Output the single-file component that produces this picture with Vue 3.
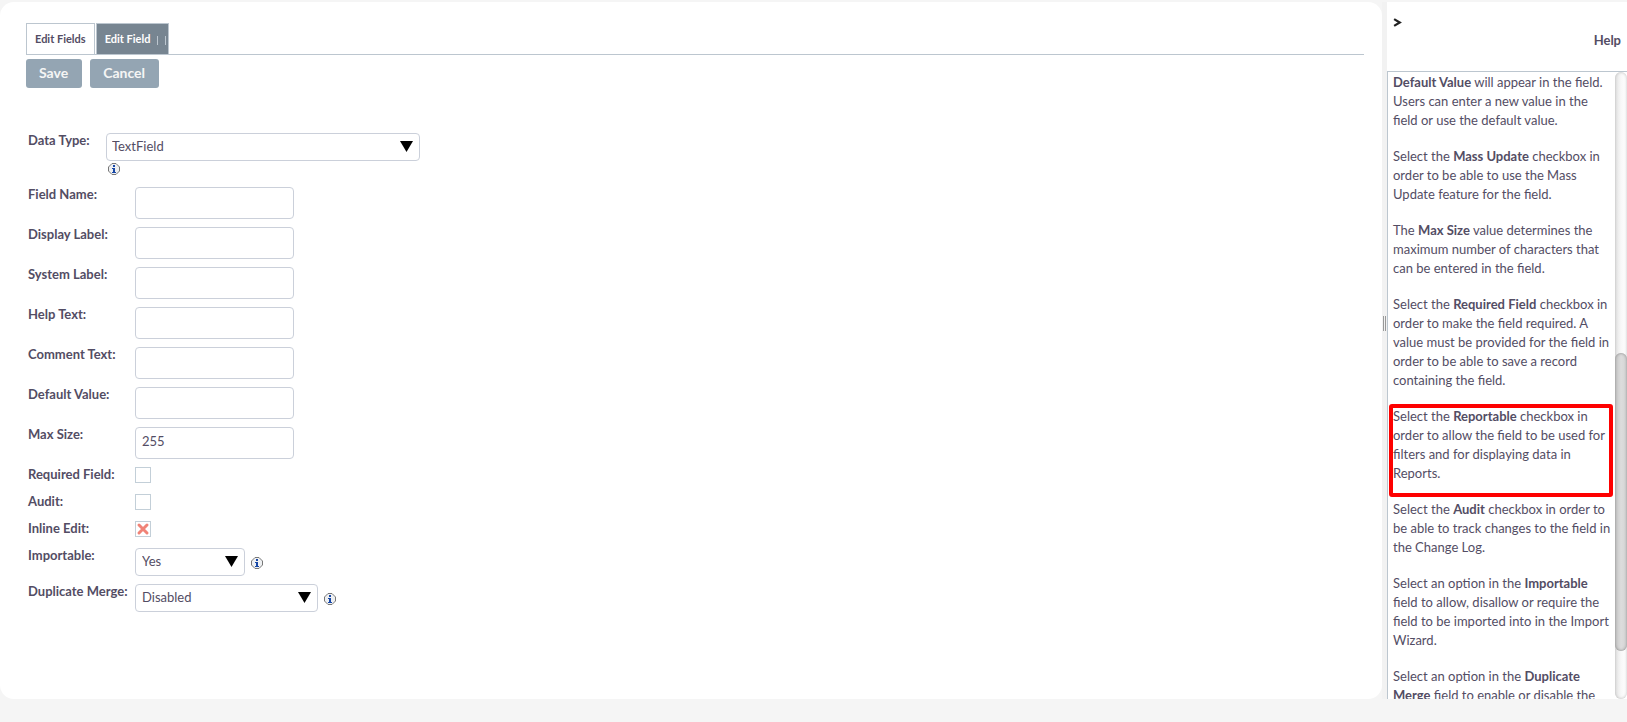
<script setup>
import { ref } from 'vue'

const dataType = ref('TextField')
const textFields = ref([
  { id: 'name', label: 'Field Name:', value: '' },
  { id: 'display', label: 'Display Label:', value: '' },
  { id: 'system', label: 'System Label:', value: '' },
  { id: 'help', label: 'Help Text:', value: '' },
  { id: 'comment', label: 'Comment Text:', value: '' },
  { id: 'default', label: 'Default Value:', value: '' },
  { id: 'max', label: 'Max Size:', value: '255' },
])
const checks = ref([
  { id: 'required', label: 'Required Field:', on: false },
  { id: 'audit', label: 'Audit:', on: false },
  { id: 'inline', label: 'Inline Edit:', on: true },
])
const selects = ref([
  { id: 'importable', label: 'Importable:', value: 'Yes', size: 'small' },
  { id: 'duplicate', label: 'Duplicate Merge:', value: 'Disabled', size: 'medium' },
])
const helpItems = [
  { before: '', term: 'Default Value', after: ' will appear in the field. Users can enter a new value in the field or use the default value.' },
  { before: 'Select the ', term: 'Mass Update', after: ' checkbox in order to be able to use the Mass Update feature for the field.' },
  { before: 'The ', term: 'Max Size', after: ' value determines the maximum number of characters that can be entered in the field.' },
  { before: 'Select the ', term: 'Required Field', after: ' checkbox in order to make the field required. A value must be provided for the field in order to be able to save a record containing the field.' },
  { before: 'Select the ', term: 'Reportable', after: ' checkbox in order to allow the field to be used for filters and for displaying data in Reports.', marked: true },
  { before: 'Select the ', term: 'Audit', after: ' checkbox in order to be able to track changes to the field in the Change Log.' },
  { before: 'Select an option in the ', term: 'Importable', after: ' field to allow, disallow or require the field to be imported into in the Import Wizard.' },
  { before: 'Select an option in the ', term: 'Duplicate Merge', after: ' field to enable or disable the' },
]
</script>

<template>
  <svg class="defs" aria-hidden="true">
    <symbol id="info" viewBox="0 0 12 12">
      <path d="M4 .5h4L11.500 4v4L8 11.500H4L.5 8V4z" fill="#eef0f2" stroke="#777" />
      <path d="M5 2h2v2H5zM4 5h3v4h1v1H4V9h1V6H4z" fill="#1747a6" />
    </symbol>
    <symbol id="arrow" viewBox="0 0 13 11"><path d="M0 0h13L6.500 11z" /></symbol>
  </svg>
  <div class="page">
    <main class="editor">
      <nav class="tabs">
        <button class="tab" type="button">Edit Fields</button>
        <button class="tab active" type="button">Edit Field<i></i><i></i></button>
      </nav>
      <div class="actions">
        <button type="button">Save</button>
        <button type="button">Cancel</button>
      </div>
      <form class="form" @submit.prevent>
        <div class="row type-row">
          <label for="data-type">Data Type:</label>
          <div class="type-control">
            <span class="select large">
              <select id="data-type" v-model="dataType"><option>TextField</option></select>
              <svg class="arrow"><use href="#arrow" /></svg>
            </span>
            <svg class="info"><use href="#info" /></svg>
          </div>
        </div>
        <div v-for="f in textFields" :key="f.id" class="row">
          <label :for="f.id">{{ f.label }}</label>
          <input :id="f.id" v-model="f.value" class="text" type="text">
        </div>
        <div v-for="c in checks" :key="c.id" class="row">
          <label :for="c.id">{{ c.label }}</label>
          <span class="check">
            <input :id="c.id" v-model="c.on" type="checkbox">
            <svg v-if="c.on" viewBox="0 0 16 16"><path d="M4 4l8 8M12 4l-8 8" /></svg>
          </span>
        </div>
        <div v-for="s in selects" :key="s.id" class="row">
          <label :for="s.id">{{ s.label }}</label>
          <span class="select" :class="s.size">
            <select :id="s.id" v-model="s.value"><option>{{ s.value }}</option></select>
            <svg class="arrow"><use href="#arrow" /></svg>
          </span>
          <svg class="info beside"><use href="#info" /></svg>
        </div>
      </form>
    </main>
    <div class="splitter"><span></span></div>
    <aside class="help">
      <header>
        <button type="button" aria-label="Collapse help">
          <svg viewBox="0 0 8 8"><path d="M1 1l5 3-5 3" /></svg>
        </button>
        <strong>Help</strong>
      </header>
      <div class="help-body">
        <div class="help-text">
          <p v-for="h in helpItems" :key="h.term" :class="{ marked: h.marked }">{{ h.before }}<b>{{ h.term }}</b>{{ h.after }}</p>
        </div>
        <div class="track"><div class="thumb"></div></div>
      </div>
    </aside>
  </div>
</template>

<style>
body {
  margin: 0;
  background: #f5f5f5;
}
</style>

<style scoped>
.page {
  box-sizing: border-box;
  display: flex;
  height: 100vh;
  padding: 2px 0 23px;
  color: #534d64;
  font: 13px/19px Lato, sans-serif;
}
.defs {
  position: absolute;
  width: 0;
  height: 0;
}
button, input, select {
  box-sizing: border-box;
  margin: 0;
  color: inherit;
  font: inherit;
}
.editor {
  flex: 1;
  min-width: 0;
  padding: 21px 18px 0 26px;
  background: #fff;
  border-radius: 14px;
}
.tabs {
  display: flex;
  gap: 1px;
  border-bottom: 1px solid #bcc6cf;
}
.tab {
  display: flex;
  align-items: center;
  height: 31px;
  padding: 0 8px 1px;
  border: 1px solid #bcc6cf;
  border-bottom: 0;
  background: #fff;
  font-size: 11px;
  font-weight: 700;
}
.tab.active {
  padding-right: 2px;
  background: #778591;
  color: #fff;
}
.tab i {
  width: 1px;
  height: 9px;
  margin: 3px 0 0 7px;
  background: #bcc6cf;
}
.actions {
  display: flex;
  gap: 8px;
  margin-top: 4px;
}
.actions button {
  height: 29px;
  padding: 0 14px 3px 13px;
  border: 0;
  border-radius: 3px;
  background: #94a5b3;
  color: #f5f5f5;
  font-size: 14px;
  font-weight: 700;
}
.form {
  display: flex;
  flex-direction: column;
  gap: 8px;
  margin-top: 45px;
  padding-left: 2px;
}
.row {
  display: flex;
  align-items: flex-start;
}
.row label {
  flex: none;
  width: 107px;
  height: 15px;
  line-height: 15px;
  font-weight: 700;
}
.type-row label {
  width: 78px;
}
.type-row {
  height: 46px;
}
.type-control {
  display: flex;
  flex-direction: column;
  gap: 2px;
}
.text {
  width: 159px;
  height: 32px;
  padding: 0 6px 4px;
  border: 1px solid #cbd0da;
  border-radius: 4px;
  background: #fff;
}
.select {
  position: relative;
  display: block;
}
.select select {
  display: block;
  width: 100%;
  height: 28px;
  padding: 0 24px 1px 6px;
  appearance: none;
  border: 1px solid #cbd0da;
  border-radius: 4px;
  background: #fff;
}
.large { width: 314px; }
.medium { width: 183px; }
.small { width: 110px; }
.large select { padding-left: 5px; }
.arrow {
  position: absolute;
  top: 8px;
  right: 7px;
  width: 13px;
  height: 11px;
  pointer-events: none;
}
.info {
  width: 12px;
  height: 12px;
  margin-left: 2px;
}
.info.beside {
  margin: 9px 0 0 6px;
}
.check {
  position: relative;
  height: 19px;
}
.check input {
  display: block;
  width: 16px;
  height: 16px;
  appearance: none;
  border: 1px solid #c3cfd8;
  background: #fff;
}
.check svg {
  position: absolute;
  top: 0;
  left: 0;
  width: 16px;
  height: 16px;
  fill: none;
  stroke: #f08377;
  stroke-width: 3;
  stroke-linecap: round;
  pointer-events: none;
}
.splitter {
  display: flex;
  align-items: center;
  justify-content: center;
  width: 5px;
  background: #f2f2f2;
}
.splitter span {
  width: 1px;
  height: 15px;
  margin-bottom: 54px;
  border: solid #999;
  border-width: 0 1px;
}
.help {
  display: flex;
  flex-direction: column;
  width: 240px;
  background: #fff;
}
.help header {
  display: flex;
  flex-direction: column;
  align-items: flex-start;
  gap: 2px;
  height: 69px;
}
.help header button {
  margin: 14px 0 0 6px;
  padding: 2px 0;
  border: 0;
  background: none;
}
.help header svg {
  display: block;
  width: 9px;
  height: 9px;
  fill: none;
  stroke: #222;
  stroke-width: 2;
}
.help header strong {
  align-self: flex-end;
  margin-right: 6px;
}
.help-body {
  display: flex;
  flex: 1;
  min-height: 0;
  border: solid #bcc6cf;
  border-width: 1px 0 0 1px;
}
.help-text {
  flex: 1;
  padding: 1px 3px 0 5px;
  overflow: hidden;
}
.help-text p {
  position: relative;
  margin: 0 0 17px;
}
.marked::after {
  content: '';
  position: absolute;
  inset: -3px -1px -14px -4px;
  border: 4px solid #fe0000;
  border-radius: 3px;
}
.track {
  display: flex;
  flex-direction: column;
  width: 12px;
  border-radius: 6px;
  background: linear-gradient(90deg, #e2e2e2, #f8f8f8 50%, #fff);
  box-shadow: inset 0 0 3px #bbb;
}
.thumb {
  height: 47.5%;
  margin-top: 281px;
  border-radius: 6px;
  background: linear-gradient(90deg, #c4c4c4, #dcdcdc 50%, #d4d4d4);
  box-shadow: inset 0 0 3px #888;
}
</style>
